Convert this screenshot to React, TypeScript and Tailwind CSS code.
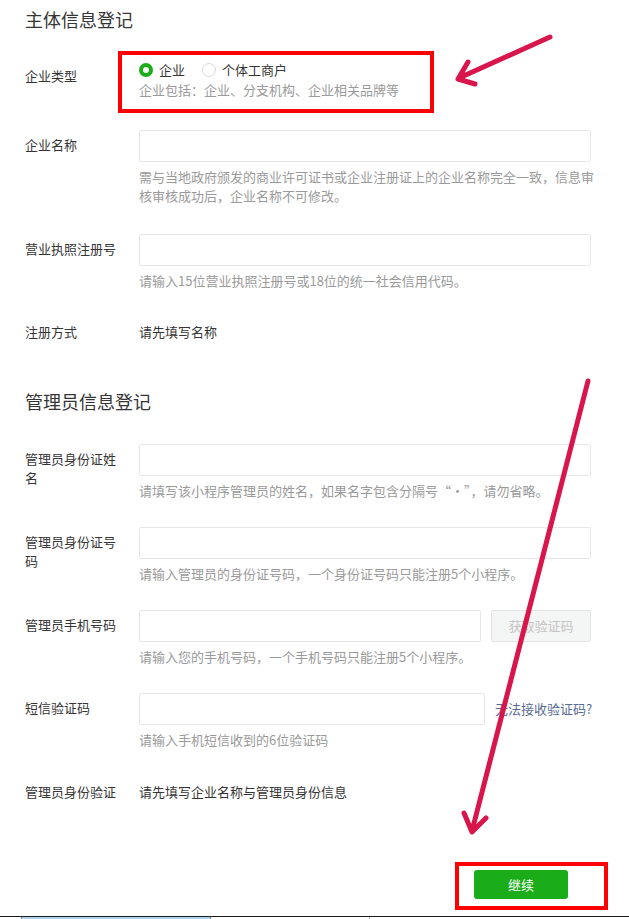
import React from "react";

// Registration form screenshot: two sections of labelled rows, with red annotation
// boxes and arrows drawn over the top.

const FONT = "font-['Noto_Sans_CJK_SC','Liberation_Sans',sans-serif]";

function Label({ children, pt = "pt-[5px]" }: { children: React.ReactNode; pt?: string }) {
  return (
    <div className={`mr-[14px] w-[100px] shrink-0 text-[13px] leading-[19px] text-[#353535] ${pt}`}>
      {children}
    </div>
  );
}

function Hint({ children }: { children: React.ReactNode }) {
  return (
    <p className="mt-[5px] whitespace-nowrap pb-[1px] text-[13px] leading-[19px] text-[#9a9a9a]">{children}</p>
  );
}

function Input({ className = "w-[452px]" }: { className?: string }) {
  return <div className={`h-[32px] rounded-[2px] border border-[#e7e7eb] bg-white ${className}`} />;
}

function InputRow({ label, hint, mt }: { label: React.ReactNode; hint: React.ReactNode; mt: string }) {
  return (
    <div className={`flex items-start ${mt}`}>
      <Label>{label}</Label>
      <div className="w-[452px]">
        <Input />
        <Hint>{hint}</Hint>
      </div>
    </div>
  );
}

function TextRow({ label, value, mt }: { label: string; value: string; mt: string }) {
  return (
    <div className={`flex items-center pb-[1.5px] text-[13px] leading-[20px] text-[#353535] ${mt}`}>
      <div className="mr-[14px] w-[100px] shrink-0">{label}</div>
      <div>{value}</div>
    </div>
  );
}

function Radio({ checked, label }: { checked?: boolean; label: string }) {
  return (
    <span className="inline-flex items-center">
      <span
        className={
          checked
            ? "h-[14px] w-[14px] rounded-full border-[4px] border-[#1aad19] bg-white"
            : "h-[14px] w-[14px] rounded-full border border-[#dadada] bg-white"
        }
      />
      <span className="ml-[6px]">{label}</span>
    </span>
  );
}

export default function App() {
  return (
    <div className={`relative h-[919px] w-[629px] overflow-hidden bg-white ${FONT}`}>
      <div className="pl-[25px]">
        <h2 className="pb-[1.5px] pt-[6.5px] text-[18px] font-normal leading-[24px] text-[#353535]">主体信息登记</h2>

        <div className="mt-[28px] flex items-start">
          <Label pt="pt-[5.5px]">企业类型</Label>
          <div>
            <div className="flex h-[20px] items-center gap-[17px] text-[13px] text-[#353535]">
              <Radio checked label="企业" />
              <Radio label="个体工商户" />
            </div>
            <p className="pb-[1px] text-[13px] leading-[20px] text-[#9a9a9a]">
              企业包括：企业、分支机构、企业相关品牌等
            </p>
          </div>
        </div>

        <InputRow
          mt="mt-[29px]"
          label="企业名称"
          hint={
            <>
              需与当地政府颁发的商业许可证书或企业注册证上的企业名称完全一致，信息审
              <br />
              核审核成功后，企业名称不可修改。
            </>
          }
        />
        <InputRow mt="mt-[28px]" label="营业执照注册号" hint="请输入15位营业执照注册号或18位的统一社会信用代码。" />
        <TextRow mt="mt-[30.5px]" label="注册方式" value="请先填写名称" />

        <h2 className="mt-[45.5px] pb-[1.5px] text-[18px] font-normal leading-[24px] text-[#353535]">管理员信息登记</h2>

        <InputRow
          mt="mt-[30px]"
          label="管理员身份证姓名"
          hint="请填写该小程序管理员的姓名，如果名字包含分隔号“·”，请勿省略。"
        />
        <InputRow mt="mt-[26px]" label="管理员身份证号码" hint="请输入管理员的身份证号码，一个身份证号码只能注册5个小程序。" />

        <div className="mt-[26px] flex items-start">
          <Label>管理员手机号码</Label>
          <div className="w-[452px]">
            <div className="flex gap-[10px]">
              <Input className="w-[342px]" />
              <button className="h-[32px] w-[100px] rounded-[2px] border border-[#e3e5e5] bg-[#f4f5f5] text-[13px] text-[#c4c4c4]">
                获取验证码
              </button>
            </div>
            <Hint>请输入您的手机号码，一个手机号码只能注册5个小程序。</Hint>
          </div>
        </div>

        <div className="mt-[26px] flex items-start">
          <Label>短信验证码</Label>
          <div>
            <div className="flex items-center gap-[10px]">
              <Input className="w-[346px]" />
              <a className="text-[13px] leading-[20px] text-[#576b95]">无法接收验证码?</a>
            </div>
            <Hint>请输入手机短信收到的6位验证码</Hint>
          </div>
        </div>

        <TextRow mt="mt-[31.5px]" label="管理员身份验证" value="请先填写企业名称与管理员身份信息" />
      </div>

      <div className="mt-[67px] flex justify-end pr-[61px]">
        <button className="h-[29px] w-[94px] rounded-[3px] bg-[#1aad19] text-[13px] text-white">继续</button>
      </div>

      <div className="mt-[17px] h-px bg-[#1b1b1b]" />
      <div className="flex h-[2px]">
        <div className="w-[21px]" />
        <div className="w-[190px] border-x border-[#6b8aa6] bg-[#a9d3ee]" />
        <div className="w-[159px] border-r border-[#9aa4ad]" />
      </div>

      {/* annotations laid over the form */}
      <div className="absolute left-[118px] top-[51px] h-[62px] w-[316px] border-[4px] border-[#fe0000]" />
      <div className="absolute left-[455px] top-[862px] h-[48px] w-[153px] border-[4px] border-[#fe0000]" />
      <svg className="pointer-events-none absolute inset-0" width={629} height={919} viewBox="0 0 629 919">
        <g stroke="#d9164b" strokeWidth={5} strokeLinecap="round" strokeLinejoin="round" fill="none">
          <path d="M550 37 L459 78 M468 62 L458 79 L475 84" />
          <path d="M588 381 L472 831 M464 813 L472 832 L486 818" />
        </g>
      </svg>
    </div>
  );
}
